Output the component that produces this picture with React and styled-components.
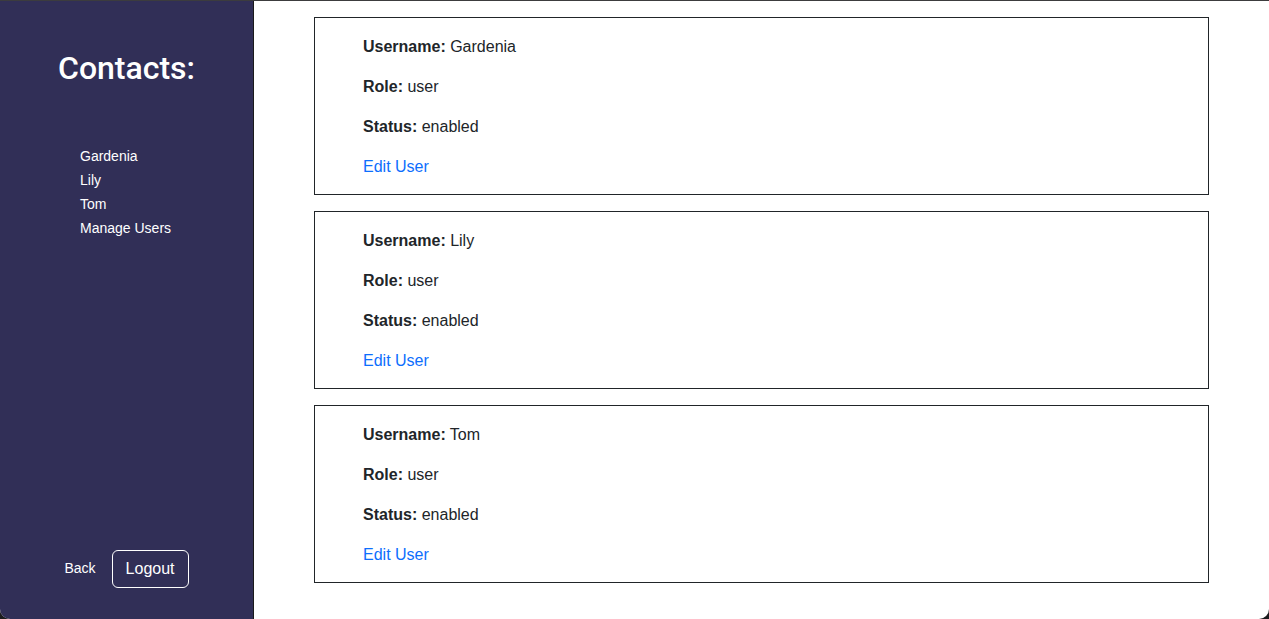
import React from 'react';
import styled, { createGlobalStyle } from 'styled-components';

const GlobalStyle = createGlobalStyle`
  html, body {
    margin: 0;
    padding: 0;
    background: #1c1c1e;
  }
  * {
    box-sizing: border-box;
  }
  body {
    font-family: "Liberation Sans", Arial, sans-serif;
    color: #212529;
  }
`;

const Frame = styled.div`
  display: flex;
  width: 1269px;
  height: 619px;
  border-top: 1px solid #3c3c3e;
  border-radius: 0 0 10px 10px;
  overflow: hidden;
  background: #ffffff;
`;

const Sidebar = styled.aside`
  display: flex;
  flex-direction: column;
  width: 254px;
  flex-shrink: 0;
  background-color: #312f57;
  border-right: 1px solid #1a1a1a;
  color: #ffffff;
  padding: 48px 0 31px;
`;

const Heading = styled.h1`
  margin: 0;
  text-align: center;
  font-family: Roboto, "Liberation Sans", sans-serif;
  font-size: 32px;
  font-weight: 500;
  line-height: 1.2;
`;

const NavList = styled.nav`
  display: flex;
  flex-direction: column;
  margin-top: 57px;
  padding-left: 80px;
  flex: 1;
`;

const NavLink = styled.a`
  color: #ffffff;
  font-size: 14px;
  line-height: 24px;
  text-decoration: none;
  cursor: pointer;
`;

const Footer = styled.div`
  display: flex;
  align-items: center;
  justify-content: center;
  gap: 16px;
`;

const BackLink = styled.a`
  color: #ffffff;
  font-size: 14px;
  text-decoration: none;
  cursor: pointer;
  margin-bottom: 2px;
`;

const LogoutButton = styled.button`
  font-family: inherit;
  font-size: 16px;
  line-height: 24px;
  color: #ffffff;
  background: transparent;
  border: 1px solid #ffffff;
  border-radius: 6px;
  padding: 6px 13px;
  cursor: pointer;
`;

const Main = styled.main`
  flex: 1;
  display: flex;
  flex-direction: column;
  align-items: center;
  gap: 16px;
  padding-top: 16px;
`;

const Card = styled.section`
  width: 895px;
  border: 1px solid #212529;
  padding: 17px 48px 0;
`;

const Line = styled.p`
  margin: 0 0 16px;
  font-size: 16px;
  line-height: 24px;

  &:last-child {
    margin-bottom: 15px;
  }
`;

const Label = styled.strong`
  font-weight: 700;
`;

const EditLink = styled.a`
  color: #0d6efd;
  text-decoration: none;
  cursor: pointer;
`;

const users = [
  { username: 'Gardenia', role: 'user', status: 'enabled' },
  { username: 'Lily', role: 'user', status: 'enabled' },
  { username: 'Tom', role: 'user', status: 'enabled' },
];

const UserCard = ({ username, role, status }) => (
  <Card>
    <Line>
      <Label>Username:</Label> {username}
    </Line>
    <Line>
      <Label>Role:</Label> {role}
    </Line>
    <Line>
      <Label>Status:</Label> {status}
    </Line>
    <Line>
      <EditLink>Edit User</EditLink>
    </Line>
  </Card>
);

const App = () => (
  <>
    <GlobalStyle />
    <Frame>
      <Sidebar>
        <Heading>Contacts:</Heading>
        <NavList>
          {users.map((u) => (
            <NavLink key={u.username}>{u.username}</NavLink>
          ))}
          <NavLink>Manage Users</NavLink>
        </NavList>
        <Footer>
          <BackLink>Back</BackLink>
          <LogoutButton>Logout</LogoutButton>
        </Footer>
      </Sidebar>
      <Main>
        {users.map((u) => (
          <UserCard key={u.username} {...u} />
        ))}
      </Main>
    </Frame>
  </>
);

export default App;
